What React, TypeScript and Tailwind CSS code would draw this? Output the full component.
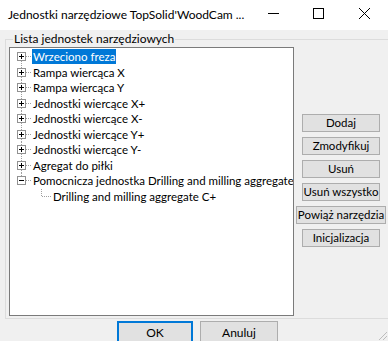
import type { ReactNode } from "react"

const items = [
  "Wrzeciono freza",
  "Rampa wiercąca X",
  "Rampa wiercąca Y",
  "Jednostki wiercące X+",
  "Jednostki wiercące X-",
  "Jednostki wiercące Y+",
  "Jednostki wiercące Y-",
  "Agregat do piłki",
  "Pomocnicza jednostka Drilling and milling aggregate",
]

const buttons = ["Dodaj", "Zmodyfikuj", "Usuń", "Usuń wszystko", "Powiąż narzędzia", "Inicjalizacja"]

function Expander({ open, first, last }: { open: boolean; first: boolean; last: boolean }) {
  return (
    <svg width="22" height="15.5" viewBox="0 0 22 15.5" className="shrink-0">
      {/* linie kropkowane */}
      <line x1="11.5" y1={first ? 8 : 0} x2="11.5" y2={last ? 8 : 15.5} stroke="#a0a0a0" strokeDasharray="1 1" />
      <line x1="16" y1="7.5" x2="22" y2="7.5" stroke="#a0a0a0" strokeDasharray="1 1" />
      <rect x="7.5" y="3.5" width="8" height="8" fill="#fff" stroke="#919191" />
      <line x1="9" y1="7.5" x2="14" y2="7.5" stroke="#000" />
      {!open && <line x1="11.5" y1="5" x2="11.5" y2="10" stroke="#000" />}
    </svg>
  )
}

function Row({ children }: { children: ReactNode }) {
  return <div className="flex h-[15.5px] items-center whitespace-nowrap">{children}</div>
}

export default function App() {
  return (
    <div
      className="relative h-[341px] w-[388px] overflow-hidden bg-[#f0f0f0] text-black"
      style={{ fontFamily: 'Lato, "Liberation Sans", Arial, sans-serif' }}
    >
      {/* Pasek tytułu */}
      <div className="flex h-[30px] items-center bg-white">
        <span className="whitespace-nowrap pl-2 text-[12px]">Jednostki narzędziowe TopSolid'WoodCam ...</span>
        <div className="ml-auto flex shrink-0 items-center">
          <svg width="46" height="30" viewBox="0 0 46 30">
            <line x1="18" y1="13.5" x2="29" y2="13.5" stroke="#000" />
          </svg>
          <svg width="46" height="30" viewBox="0 0 46 30">
            <rect x="17.5" y="8.5" width="10" height="10" fill="none" stroke="#000" />
          </svg>
          <svg width="46" height="30" viewBox="0 0 46 30">
            <path d="M17 8 L28 19 M28 8 L17 19" stroke="#000" />
          </svg>
        </div>
      </div>

      {/* Ramka grupy */}
      <div className="relative ml-[5px] mt-[9px] h-[280px] w-[400px] border border-[#dcdcdc]">
        <span className="absolute left-[7px] top-[-8px] whitespace-nowrap bg-[#f0f0f0] px-[1px] text-[12px] leading-[14px]">
          Lista jednostek narzędziowych
        </span>
        <div className="flex pl-[3px] pt-[7px]">
          <div className="h-[269px] w-[285px] shrink-0 overflow-hidden border border-[#7a7a7a] bg-white pt-[1px] text-[11.5px]">
            {items.map((label, i) => (
              <Row key={label}>
                <Expander open={i === items.length - 1} first={i === 0} last={i === items.length - 1} />
                <span
                  className={
                    i === 0
                      ? "bg-[#0078d7] px-[1px] leading-[15px] text-white"
                      : "px-[1px] leading-[15px]"
                  }
                >
                  {label}
                </span>
              </Row>
            ))}
            <Row>
              <svg width="42" height="15.5" viewBox="0 0 42 15.5" className="shrink-0">
                <line x1="31.5" y1="0" x2="31.5" y2="8" stroke="#a0a0a0" strokeDasharray="1 1" />
                <line x1="32" y1="7.5" x2="41" y2="7.5" stroke="#a0a0a0" strokeDasharray="1 1" />
              </svg>
              <span className="px-[1px] leading-[15px]">Drilling and milling aggregate C+</span>
            </Row>
          </div>

          <div className="ml-[3px] flex w-[88px] shrink-0 flex-col items-center gap-[5px] pt-[67px]">
            {buttons.map((b) => (
              <button
                key={b}
                className="h-[18px] min-w-[78px] whitespace-nowrap border border-[#adadad] bg-[#e1e1e1] px-[1px] text-[11.5px] font-normal leading-[16px]"
              >
                {b}
              </button>
            ))}
          </div>
        </div>
      </div>

      {/* Przyciski dolne */}
      <div className="mt-[2px] flex gap-[7px] pl-[117px]">
        <button className="h-[23px] w-[76px] border-2 border-[#0078d7] bg-[#e1e1e1] text-[12px]">OK</button>
        <button className="h-[23px] w-[78px] border border-[#adadad] bg-[#e1e1e1] text-[12px]">Anuluj</button>
      </div>

      {/* uchwyt zmiany rozmiaru */}
      <svg width="12" height="12" viewBox="0 0 12 12" className="absolute bottom-0 right-0">
        <path d="M11 3 L3 11 M11 7 L7 11" stroke="#bcbcbc" />
      </svg>
    </div>
  )
}
